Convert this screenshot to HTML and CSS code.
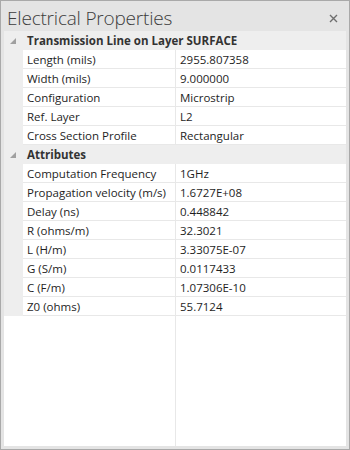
FILE: index.html
```html
<!DOCTYPE html>
<html>
<head>
<meta charset="utf-8">
<link rel="stylesheet" href="styles.css">
</head>
<body>
<div class="panel">
  <div class="titlebar">
    <span class="title">Electrical Properties</span>
    <svg class="close" width="9" height="9" viewBox="0 0 9 9"><path d="M1 1L8 8M8 1L1 8" stroke="#6e6e6e" stroke-width="1.4"/></svg>
  </div>
  <div class="grid">
    <div class="cat">
      <span class="exp"><svg width="6" height="6" viewBox="0 0 6 6"><path d="M6 0V6H0Z" fill="#a0a0a0"/></svg></span>
      <span class="cat-label">Transmission Line on Layer SURFACE</span>
    </div>
    <div class="row"><span class="gut"></span><span class="name">Length (mils)</span><span class="val">2955.807358</span></div>
    <div class="row"><span class="gut"></span><span class="name">Width (mils)</span><span class="val">9.000000</span></div>
    <div class="row"><span class="gut"></span><span class="name">Configuration</span><span class="val">Microstrip</span></div>
    <div class="row"><span class="gut"></span><span class="name">Ref. Layer</span><span class="val">L2</span></div>
    <div class="row"><span class="gut"></span><span class="name">Cross Section Profile</span><span class="val">Rectangular</span></div>
    <div class="cat">
      <span class="exp"><svg width="6" height="6" viewBox="0 0 6 6"><path d="M6 0V6H0Z" fill="#a0a0a0"/></svg></span>
      <span class="cat-label">Attributes</span>
    </div>
    <div class="row"><span class="gut"></span><span class="name">Computation Frequency</span><span class="val">1GHz</span></div>
    <div class="row"><span class="gut"></span><span class="name">Propagation velocity (m/s)</span><span class="val">1.6727E+08</span></div>
    <div class="row"><span class="gut"></span><span class="name">Delay (ns)</span><span class="val">0.448842</span></div>
    <div class="row"><span class="gut"></span><span class="name">R (ohms/m)</span><span class="val">32.3021</span></div>
    <div class="row"><span class="gut"></span><span class="name">L (H/m)</span><span class="val">3.33075E-07</span></div>
    <div class="row"><span class="gut"></span><span class="name">G (S/m)</span><span class="val">0.0117433</span></div>
    <div class="row"><span class="gut"></span><span class="name">C (F/m)</span><span class="val">1.07306E-10</span></div>
    <div class="row"><span class="gut"></span><span class="name">Z0 (ohms)</span><span class="val">55.7124</span></div>
    <div class="filler"><span class="fill-left"></span></div>
  </div>
</div>
</body>
</html>
```
FILE: styles.css
```css
html, body {
  margin: 0;
  padding: 0;
}
body {
  width: 350px;
  height: 450px;
  overflow: hidden;
  font-family: "Open Sans", "Noto Sans", sans-serif;
  font-size: 11.5px;
  color: #1e1e1e;
}
.panel {
  box-sizing: border-box;
  width: 350px;
  height: 450px;
  border: 1px solid #a9a9a9;
  background: #e4e4e4;
  padding: 0 3px 3px 3px;
  display: flex;
  flex-direction: column;
}
.titlebar {
  height: 30px;
  display: flex;
  align-items: center;
  justify-content: space-between;
  padding: 0 8px 0 3px;
  flex: none;
}
.title {
  font-family: "Open Sans", sans-serif;
  font-weight: 300;
  font-size: 19px;
  color: #3c3c3c;
  margin-top: 4px;
  letter-spacing: -0.2px;
}
.close {
  margin-top: 4px;
}
.grid {
  flex: 1;
  background: #ffffff;
  display: flex;
  flex-direction: column;
}
.cat {
  height: 19px;
  background: #eeeeee;
  display: flex;
  align-items: center;
  flex: none;
}
.exp {
  width: 19px;
  display: flex;
  justify-content: center;
  padding-right: 2px;
  box-sizing: border-box;
}
.cat-label {
  font-weight: 700;
  color: #333333;
  padding-left: 4px;
}
.row {
  display: grid;
  grid-template-columns: 19px 153px 1fr;
  height: 19px;
  flex: none;
}
.gut {
  background: #eeeeee;
}
.name, .val {
  box-sizing: border-box;
  border-bottom: 1px solid #e8e8e8;
  padding-left: 4px;
  line-height: 19px;
  white-space: nowrap;
  overflow: hidden;
}
.name {
  border-right: 1px solid #e8e8e8;
}
.filler {
  flex: 1;
  display: flex;
}
.fill-left {
  box-sizing: border-box;
  width: 172px;
  border-right: 1px solid #e8e8e8;
}
```
